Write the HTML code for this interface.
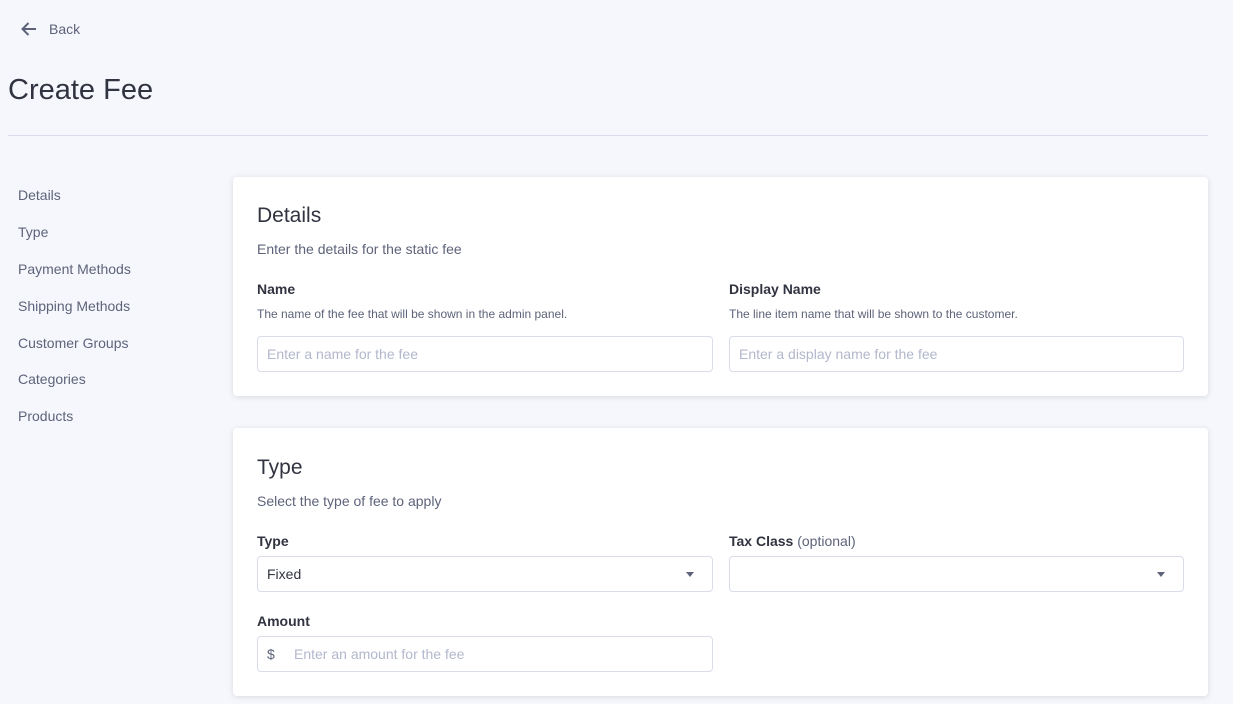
<!DOCTYPE html>
<html><head><style>
*{box-sizing:border-box;margin:0;padding:0}
body{width:1233px;height:704px;background:#f5f7fc;font-family:"Liberation Sans",sans-serif;color:#313440;position:relative;overflow:hidden}
.a{position:absolute;white-space:nowrap}
.card{position:absolute;left:233px;width:975px;background:#fff;border-radius:4px;box-shadow:0 1px 6px rgba(49,52,64,.15)}
.in{position:absolute;height:36px;border:1px solid #d9dce9;border-radius:4px;background:#fff;font-size:14px;line-height:34px;padding-left:9px;color:#b3b7cc}
.lab{font-size:14px;font-weight:bold;color:#313440}
.hint{font-size:12px;color:#5e637a}
.nav{font-size:14px;color:#5e637a;left:18px}
.car{position:absolute;top:15px;width:0;height:0;border-left:4px solid transparent;border-right:4px solid transparent;border-top:5px solid #5e637a}
</style></head><body>
<svg class="a" style="left:20px;top:21px" width="18" height="16" viewBox="0 0 18 16"><path d="M16 8H3M8.5 2L2.5 8l6 6" fill="none" stroke="#5e637a" stroke-width="2"/></svg>
<div class="a" style="left:49px;top:21px;font-size:14px;color:#5e637a">Back</div>
<div class="a" style="left:8px;top:74px;font-size:29px;font-weight:300;color:#313440">Create Fee</div>
<div class="a" style="left:8px;top:135px;width:1200px;height:1px;background:#d9dce9"></div>
<div class="a nav" style="top:187px">Details</div>
<div class="a nav" style="top:224px">Type</div>
<div class="a nav" style="top:261px">Payment Methods</div>
<div class="a nav" style="top:298px">Shipping Methods</div>
<div class="a nav" style="top:335px">Customer Groups</div>
<div class="a nav" style="top:371px">Categories</div>
<div class="a nav" style="top:408px">Products</div>

<div class="card" style="top:177px;height:219px"></div>
<div class="a" style="left:257px;top:204px;font-size:21px">Details</div>
<div class="a" style="left:257px;top:241px;font-size:14px;color:#5e637a">Enter the details for the static fee</div>
<div class="a lab" style="left:257px;top:281px">Name</div>
<div class="a hint" style="left:257px;top:307px">The name of the fee that will be shown in the admin panel.</div>
<div class="in" style="left:257px;top:336px;width:456px">Enter a name for the fee</div>
<div class="a lab" style="left:729px;top:281px">Display Name</div>
<div class="a hint" style="left:729px;top:307px">The line item name that will be shown to the customer.</div>
<div class="in" style="left:729px;top:336px;width:455px">Enter a display name for the fee</div>

<div class="card" style="top:428px;height:268px"></div>
<div class="a" style="left:257px;top:456px;font-size:21px">Type</div>
<div class="a" style="left:257px;top:493px;font-size:14px;color:#5e637a">Select the type of fee to apply</div>
<div class="a lab" style="left:257px;top:533px">Type</div>
<div class="in" style="left:257px;top:556px;width:456px;color:#313440">Fixed<div class="car" style="right:18px"></div></div>
<div class="a lab" style="left:729px;top:533px">Tax Class <span style="font-weight:normal;color:#5e637a">(optional)</span></div>
<div class="in" style="left:729px;top:556px;width:455px"><div class="car" style="right:18px"></div></div>
<div class="a lab" style="left:257px;top:613px">Amount</div>
<div class="in" style="left:257px;top:636px;width:456px"><span style="color:#5e637a">$</span><span style="position:absolute;left:36px">Enter an amount for the fee</span></div>
</body></html>
